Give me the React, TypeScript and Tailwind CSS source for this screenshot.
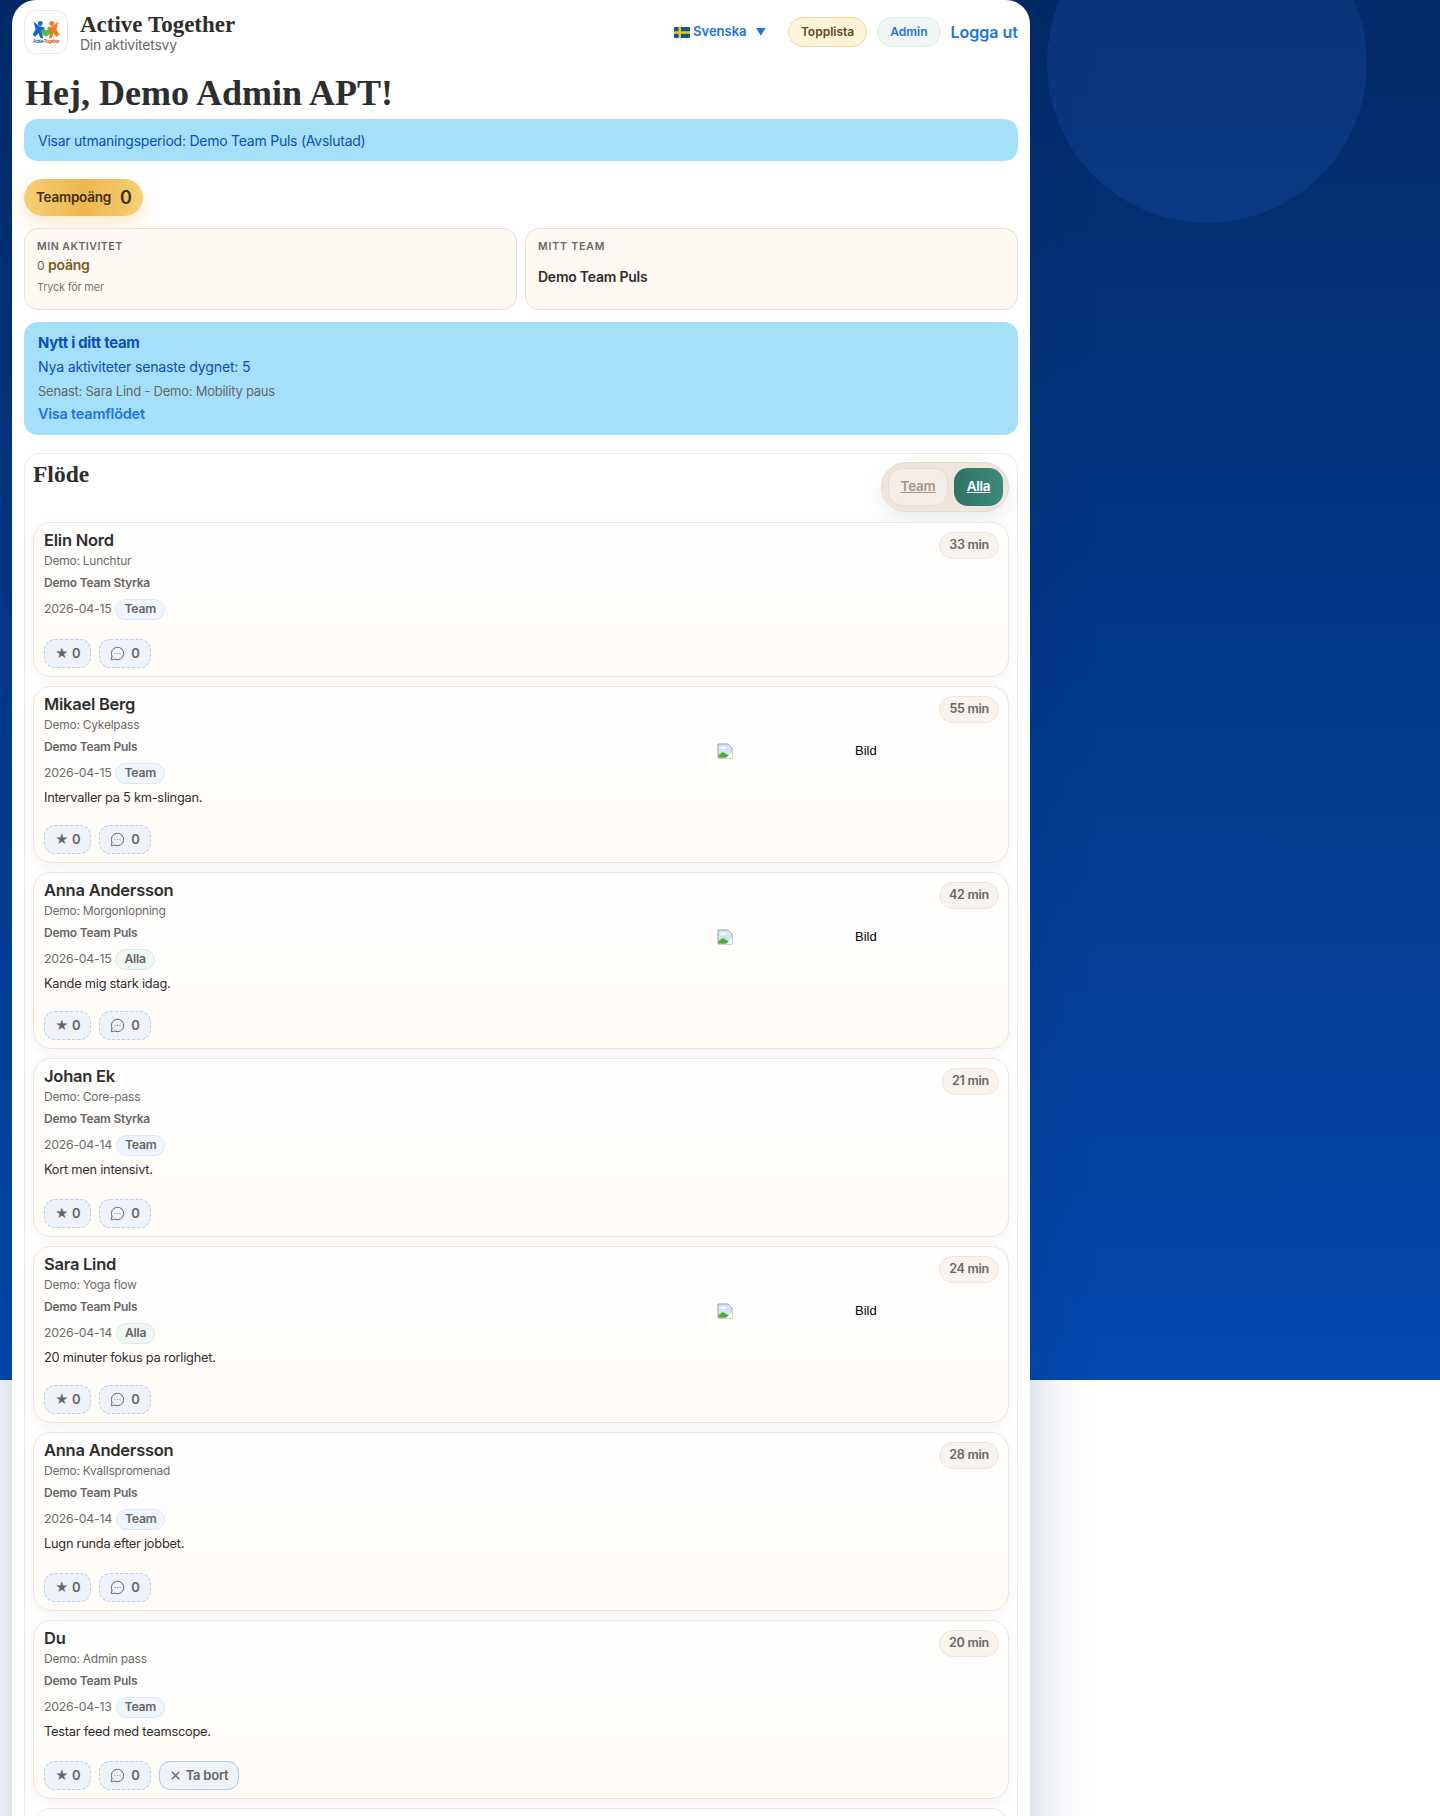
import { MessageCircleMore, X } from 'lucide-react';

const sans = "font-['Inter','Noto_Sans',sans-serif]";
const serif = "font-['Liberation_Serif',serif]";

type FeedItem = {
  name: string;
  activity: string;
  team: string;
  date: string;
  scope: 'Team' | 'Alla';
  minutes: number;
  note?: string;
  image?: boolean;
  mine?: boolean;
};

const feed: FeedItem[] = [
  { name: 'Elin Nord', activity: 'Demo: Lunchtur', team: 'Demo Team Styrka', date: '2026-04-15', scope: 'Team', minutes: 33 },
  { name: 'Mikael Berg', activity: 'Demo: Cykelpass', team: 'Demo Team Puls', date: '2026-04-15', scope: 'Team', minutes: 55, note: 'Intervaller pa 5 km-slingan.', image: true },
  { name: 'Anna Andersson', activity: 'Demo: Morgonlopning', team: 'Demo Team Puls', date: '2026-04-15', scope: 'Alla', minutes: 42, note: 'Kande mig stark idag.', image: true },
  { name: 'Johan Ek', activity: 'Demo: Core-pass', team: 'Demo Team Styrka', date: '2026-04-14', scope: 'Team', minutes: 21, note: 'Kort men intensivt.' },
  { name: 'Sara Lind', activity: 'Demo: Yoga flow', team: 'Demo Team Puls', date: '2026-04-14', scope: 'Alla', minutes: 24, note: '20 minuter fokus pa rorlighet.', image: true },
  { name: 'Anna Andersson', activity: 'Demo: Kvallspromenad', team: 'Demo Team Puls', date: '2026-04-14', scope: 'Team', minutes: 28, note: 'Lugn runda efter jobbet.' },
  { name: 'Du', activity: 'Demo: Admin pass', team: 'Demo Team Puls', date: '2026-04-13', scope: 'Team', minutes: 20, note: 'Testar feed med teamscope.', mine: true },
];

function Logo() {
  return (
    <svg viewBox="0 0 44 44" className="h-full w-full">
      <circle cx="16" cy="13" r="2.6" fill="#1668c7" />
      <path d="M9 11l6 5 5 1 1 5-3 1 1 6-3-1-2-5-3 4-3-2 3-6z" fill="#1668c7" />
      <circle cx="28" cy="13" r="2.6" fill="#f07a22" />
      <path d="M35 11l-6 5-5 1-1 5 3 1-1 6 3-1 2-5 3 4 3-2-3-6z" fill="#f07a22" />
      <path d="M22 27c-3-2-5-3.500-5-5.500 0-2.500 3.500-3 5-1 1.500-2 5-1.500 5 1 0 2-2 3.500-5 5.500z" fill="#57b947" />
      <text x="22" y="34" textAnchor="middle" fontSize="5" fontWeight="700" fontFamily="Liberation Sans" fill="#e8541e" textLength="28">
        <tspan fill="#1668c7">Active</tspan>-Together
      </text>
    </svg>
  );
}

function SwedishFlag() {
  return (
    <svg viewBox="0 0 16 11" className="h-[11px] w-4">
      <rect width="16" height="11" rx="1" fill="#0b5a9c" />
      <rect x="4.500" width="2.500" height="11" fill="#f5c518" />
      <rect y="4.250" width="16" height="2.500" fill="#f5c518" />
    </svg>
  );
}

function BrokenImage() {
  return (
    <svg viewBox="0 0 16 16" className="h-4 w-4 shrink-0">
      <path d="M1 1h10l4 4v10H1z" fill="#d6e4fb" stroke="#a3a3a3" />
      <path d="M1.500 12l4-3 4 2 5 3v.500h-13z" fill="#4caf2f" />
      <path d="M3 5c2-2 5-2 7 0-2 1-5 1-7 0z" fill="#fff" />
      <path d="M9 15l6-6v6z" fill="#fff" />
    </svg>
  );
}

function ActionChip({ children, solid = false }: { children: React.ReactNode; solid?: boolean }) {
  return (
    <span
      className={`flex h-[29px] items-center rounded-[11px] border bg-[#eef2f9] text-[13px] font-semibold text-[#666] ${
        solid ? 'gap-1 border-[#a9c8f3] pr-[10px] pl-[9px] text-[12.500px]' : 'gap-[6px] border-dashed border-[#b4cff5] px-[10px]'
      }`}
    >
      {children}
    </span>
  );
}

function FeedCard({ item }: { item: FeedItem }) {
  return (
    <article className="flex rounded-[18px] border border-[#efe4d8] bg-gradient-to-b from-white to-[#fffbf6] pt-[6px] pr-[9px] pb-[8px] pl-[10px] shadow-[0_4px_14px_rgba(0,0,0,0.05)]">
      <div className="min-w-0 flex-1">
        <h3 className="text-[16.500px] leading-[22px] font-semibold text-[#2e2e2e]">{item.name}</h3>
        <p className="mt-px text-[12px] leading-[18px] text-[#6b6b6b]">{item.activity}</p>
        <p className="mt-[4px] text-[12px] leading-[18px] font-semibold text-[#666]">{item.team}</p>
        <div className="mt-[6px] flex h-[22px] items-center gap-1 text-[12.300px] text-[#6b6b6b]">
          {item.date}
          <span
            className={`flex h-[21px] items-center rounded-full border px-2 text-[12.200px] font-semibold text-[#666] ${
              item.scope === 'Team' ? 'border-[#d9e7fb] bg-[#eff5fe]' : 'border-[#d5ebe2] bg-[#eff7f4]'
            }`}
          >
            {item.scope}
          </span>
        </div>
        {item.note && <p className="mt-[4px] text-[12.800px] leading-[20px] text-[#2e2e2e]">{item.note}</p>}
        <div className={`flex gap-2 ${item.image ? 'mt-[17px]' : 'mt-[19px]'}`}>
          <ActionChip>
            <span className="w-[11px] text-center text-[13px] leading-none">★</span>0
          </ActionChip>
          <ActionChip>
            <MessageCircleMore className="h-[15px] w-[15px]" strokeWidth={1.600} />0
          </ActionChip>
          {item.mine && (
            <ActionChip solid>
              <X className="h-[13px] w-[13px]" strokeWidth={2.500} />
              Ta bort
            </ActionChip>
          )}
        </div>
      </div>
      <div className="flex w-[282px] flex-col items-end pt-[3px]">
        <span className="flex h-[27px] items-center rounded-full border border-[#efe4d8] bg-[#f8f3ed] px-[9px] text-[12.500px] font-semibold text-[#666]">
          {item.minutes} min
        </span>
        {item.image && (
          <div className="mt-[18px] flex w-full items-center text-[13px] text-black">
            <BrokenImage />
            <span className="ml-[122px] font-['Liberation_Sans',sans-serif] tracking-normal">Bild</span>
          </div>
        )}
      </div>
    </article>
  );
}

export default function App() {
  return (
    <div className={`relative h-[1816px] overflow-hidden bg-white tracking-[-0.015em] ${sans}`}>
      <div className="absolute inset-x-0 top-0 h-[1380px] overflow-hidden bg-gradient-to-b from-[#032a68] to-[#0449ae]">
        <div className="absolute top-[-97px] right-[73px] h-[320px] w-[320px] rounded-full bg-[#3b82f6]/[0.13]" />
      </div>

      <main className="relative ml-3 w-[1018px] rounded-[24px] bg-white px-3 pb-6 shadow-[0_20px_60px_rgba(3,42,104,0.25)]">
        <header className="flex h-[64px] items-center justify-between">
          <div className="flex items-center gap-3">
            <div className="h-11 w-11 rounded-[12px] border border-[#efe4d8] bg-white">
              <Logo />
            </div>
            <div className="pb-[2px]">
              <div className={`${serif} text-[23px] leading-[28px] font-bold tracking-normal text-[#2e2e2e]`}>Active Together</div>
              <div className="-mt-[2px] text-[14px] leading-[15px] text-[#666]">Din aktivitetsvy</div>
            </div>
          </div>
          <nav className="flex items-center tracking-normal">
            <span className="flex items-center gap-[3px] text-[13px] font-semibold text-[#2173e6]">
              <SwedishFlag />
              Svenska
              <span className="ml-[6px] text-[10px]">▼</span>
            </span>
            <span className="ml-[22px] flex h-[30px] items-center rounded-full border border-[#f0d79f] bg-[#fff3d9] px-3 text-[12px] font-semibold text-[#5e4a22]">
              Topplista
            </span>
            <span className="ml-[10px] flex h-[30px] items-center rounded-full border border-[#dcebe6] bg-[#eff6f4] px-3 text-[12px] font-semibold text-[#2173e6]">
              Admin
            </span>
            <span className="ml-[10px] text-[16px] font-semibold text-[#2173e6]">Logga ut</span>
          </nav>
        </header>

        <h1 className={`${serif} mt-[6px] pl-px text-[36px] leading-[46px] font-bold tracking-normal text-[#2e2e2e]`}>Hej, Demo Admin APT!</h1>

        <div className="mt-[3px] flex h-[42px] items-center rounded-[14px] bg-[#a5e0fb] px-[14px] pt-px text-[14px] text-[#0b4fbd]">
          Visar utmaningsperiod: Demo Team Puls (Avslutad)
        </div>

        <div className="mt-[18px] flex h-[37px] w-[119px] items-center gap-[9px] rounded-full bg-gradient-to-r from-[#f5cf75] via-[#efb64f] to-[#f5cf75] pl-3 text-[13.500px] font-semibold text-[#3d2f14] shadow-[0_8px_18px_rgba(239,182,79,0.3)]">
          Teampoäng <span className="text-[18px]">0</span>
        </div>

        <section className="mt-3 grid grid-cols-2 gap-2">
          <div className="h-[82px] rounded-[14px] border border-[#eadfd2] bg-[#fff9f4] px-3 pt-[10px]">
            <div className="text-[10.500px] leading-[16px] font-semibold tracking-[0.05em] text-[#666]">MIN AKTIVITET</div>
            <div className="text-[14px] leading-[20px] text-[#666]">
              <span className="text-[12px]">0</span> <span className="font-semibold text-[#7b5a1e]">poäng</span>
            </div>
            <div className="mt-[3px] text-[11px] leading-[16px] text-[#777]">Tryck för mer</div>
          </div>
          <div className="h-[82px] rounded-[14px] border border-[#eadfd2] bg-[#fff9f4] px-3 pt-[10px]">
            <div className="text-[10.500px] leading-[16px] font-semibold tracking-[0.08em] text-[#666]">MITT TEAM</div>
            <div className="mt-[12px] text-[14px] leading-[20px] font-semibold text-[#2e2e2e]">Demo Team Puls</div>
          </div>
        </section>

        <section className="mt-3 h-[113px] rounded-[14px] bg-[#a5e0fb] px-[14px] pt-[11px]">
          <div className="text-[14.800px] leading-[20px] font-bold text-[#0b4fbd]">Nytt i ditt team</div>
          <div className="mt-[4px] text-[14.200px] leading-[20px] text-[#0b4fbd]">Nya aktiviteter senaste dygnet: 5</div>
          <div className="mt-[4px] text-[13px] leading-[20px] text-[#666]">Senast: Sara Lind - Demo: Mobility paus</div>
          <div className="mt-[3px] text-[14.500px] leading-[20px] font-semibold text-[#2173e6]">Visa teamflödet</div>
        </section>

        <section className="mt-[18px] rounded-[16px] border border-[#eeeae6] bg-white px-2 pt-2">
          <div className="flex h-[60px] items-start justify-between">
            <h2 className={`${serif} text-[23.500px] leading-[24px] font-bold tracking-normal text-[#2e2e2e]`}>Flöde</h2>
            <div className="flex h-[50px] items-center gap-[6px] rounded-full border border-[#e6dccf] bg-[#efe6db] pr-[5px] pl-[6px] shadow-[0_8px_18px_rgba(47,122,110,0.12)]">
              <span className="flex h-[38px] w-[60px] items-center justify-center rounded-[14px] border border-[#e6dccf] bg-[#f5eee6] pb-px text-[13.500px] font-semibold text-[#a89384] underline">
                Team
              </span>
              <span className="flex h-[38px] w-[49px] items-center justify-center rounded-[14px] bg-gradient-to-r from-[#2f7268] to-[#3d8a7c] pb-px text-[13.500px] font-semibold text-white underline">
                Alla
              </span>
            </div>
          </div>
          <div className="flex flex-col gap-[9px]">
            {feed.map((item) => (
              <FeedCard key={item.name + item.activity} item={item} />
            ))}
            <div className="h-[120px] rounded-[18px] border border-[#efe4d8] bg-white" />
          </div>
        </section>
      </main>
    </div>
  );
}
